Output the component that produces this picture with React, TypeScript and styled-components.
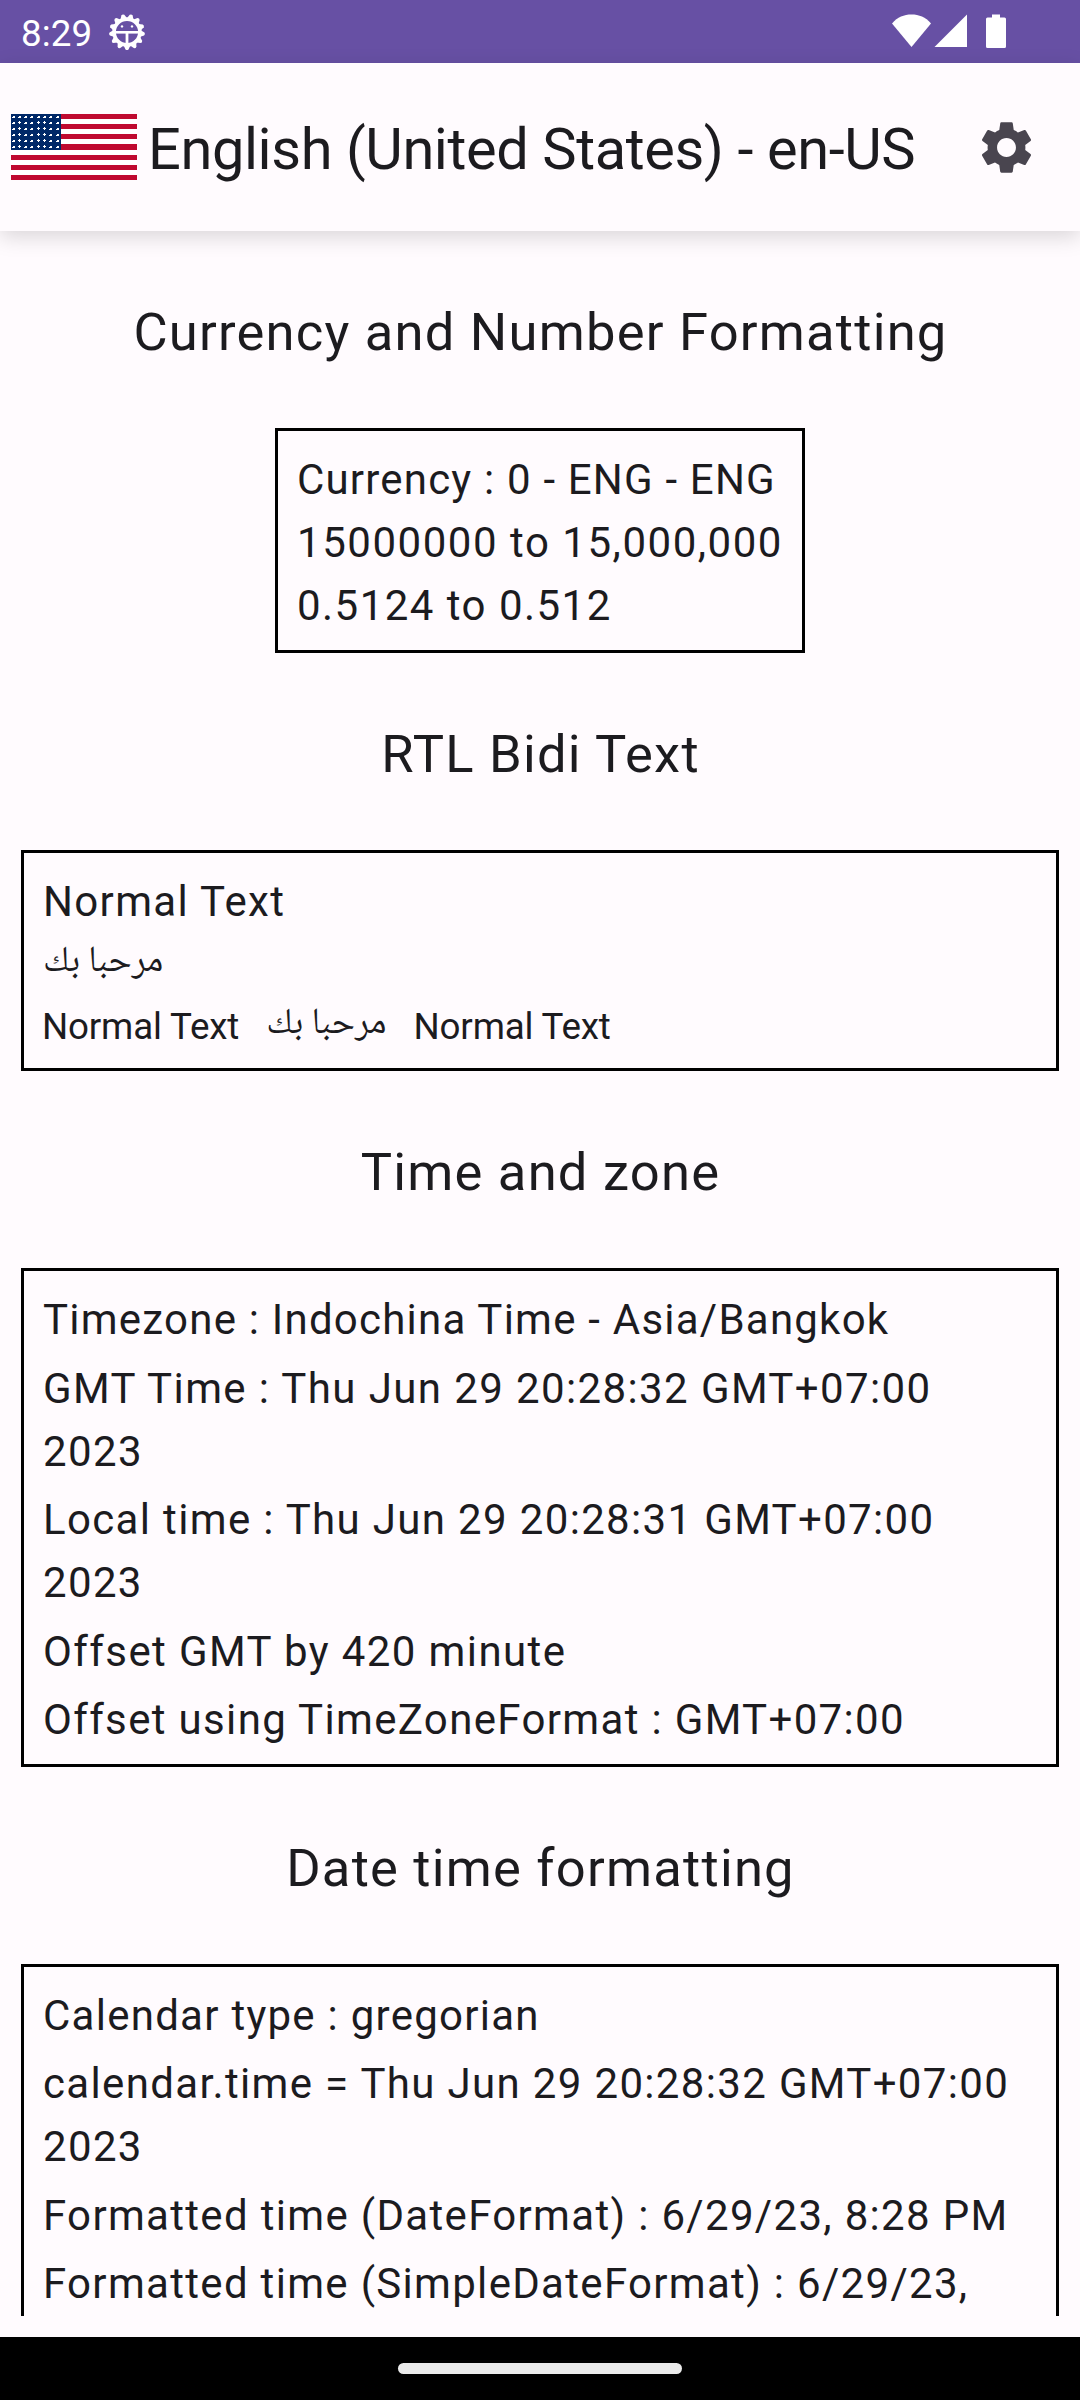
import React from "react";
import styled, { createGlobalStyle } from "styled-components";
import { MdSettings } from "react-icons/md";

const Global = createGlobalStyle`
  * { box-sizing: border-box; }
  body { margin: 0; background: #fffbfe; }
`;

const Screen = styled.div`
  width: 1080px;
  height: 2400px;
  display: flex;
  flex-direction: column;
  background: #fffbfe;
  color: #1c1b1f;
  font-family: Roboto, "Noto Sans", sans-serif;
  font-size: 42px;
  line-height: 63px;
  overflow: hidden;
`;

const StatusBar = styled.div`
  flex: none;
  height: 63px;
  display: flex;
  align-items: center;
  justify-content: space-between;
  padding: 0 70px 0 21px;
  background: #6750a4;
  color: #fff;
`;

const StatusGroup = styled.div`
  display: flex;
  align-items: center;
`;

const Clock = styled.span`
  font-size: 36.75px;
  letter-spacing: 0.1px;
  margin-top: 3px;
  margin-right: 16px;
`;

const AppBar = styled.header`
  flex: none;
  height: 168px;
  display: flex;
  align-items: center;
  padding: 0 42px 0 11px;
  background: #fffbfe;
  box-shadow: 0 6px 20px rgba(0, 0, 0, 0.15);
  z-index: 1;
`;

const Title = styled.h1`
  flex: 1;
  margin: 5px 0 0 11px;
  font-size: 57.75px;
  font-weight: 400;
  letter-spacing: -0.4px;
  line-height: 73px;
  white-space: nowrap;
`;

const SettingsButton = styled.button`
  display: flex;
  border: 0;
  padding: 0;
  background: none;
  color: #49454f;
  font-size: 63px;
`;

const Content = styled.main`
  flex: none;
  height: 2085px;
  overflow: hidden;
  display: flex;
  flex-direction: column;
  align-items: center;
  padding: 0 21px;
`;

const Heading = styled.h2<{ $track?: number }>`
  flex: none;
  height: 197px;
  margin: 0;
  padding: 5px 0 0 1px;
  display: flex;
  align-items: center;
  font-size: 52.5px;
  font-weight: 400;
  letter-spacing: ${(p) => p.$track ?? 1.23}px;
  white-space: nowrap;
`;

const Card = styled.section<{ $fit?: boolean; $height?: number; $gap?: number }>`
  flex: none;
  width: ${(p) => (p.$fit ? "530px" : "100%")};
  height: ${(p) => (p.$height ? `${p.$height}px` : "auto")};
  display: flex;
  flex-direction: column;
  gap: ${(p) => p.$gap ?? 0}px;
  border: 3px solid #000;
  padding: 17px 20px 0 19px;
  white-space: ${(p) => (p.$fit ? "nowrap" : "normal")};
`;

const Line = styled.p<{ $track?: number }>`
  margin: 0;
  letter-spacing: ${(p) => p.$track ?? 1.34}px;
`;

const Arabic = styled.p`
  margin: 0;
  direction: rtl;
  align-self: flex-start;
  font-family: "Noto Naskh Arabic", "Noto Sans Arabic", "DejaVu Sans", sans-serif;
  font-size: 36.75px;
  letter-spacing: 0;
  line-height: 61px;
`;

const BidiRow = styled.div`
  display: flex;
  gap: 27px;
  margin-left: -1px;
  padding-top: 1px;
  font-size: 36.75px;
`;

const NavBar = styled.footer`
  flex: none;
  height: 63px;
  margin-top: 21px;
  display: flex;
  justify-content: center;
  align-items: center;
  background: #000;
`;

const HomePill = styled.div`
  width: 284px;
  height: 11px;
  border-radius: 6px;
  background: #ebebeb;
`;

const FlagArt = styled.svg`
  flex: none;
  shape-rendering: crispEdges;
`;

const STRIPES = [0, 10, 20, 30, 41, 51, 61];
const STAR_X = [2, 8, 14, 20, 27, 33, 39, 46];
const STAR_Y = [1, 7, 13, 19, 25, 31];
const PLUS = "h1v1h1v1h-1v1h-1v-1h-1v-1h1z";
const BLOCK = "h2v2h-3v-1h1z";

function Flag() {
  return (
    <FlagArt width="126" height="66" viewBox="0 0 126 66">
      <rect width="126" height="66" fill="#fff" />
      {STRIPES.map((y) => (
        <rect key={y} y={y} width="126" height={y === 30 ? 6 : 5} fill="#bf0a30" />
      ))}
      <rect width="50" height="36" fill="#002868" />
      {STAR_Y.map((y, r) =>
        STAR_X.map((x, c) => {
          const plus = r > 0 && (c === 1 || c === 4 || c === 5);
          return <path key={`${r}-${c}`} d={`M${x} ${plus ? y : y + 1}${plus ? PLUS : BLOCK}`} fill="#fff" />;
        }),
      )}
    </FlagArt>
  );
}

function DebugIcon() {
  const teeth = Array.from({ length: 13 }, (_, i) => 180 + (i * 360) / 13);
  return (
    <svg width="38" height="38" viewBox="-19 -19 38 38" fill="none" stroke="#fff">
      <circle r="12.9" strokeWidth="3.6" />
      {teeth.map((a) => (
        <path key={a} d="M-3.2 -13.8 L-1.5 -17.4 Q0 -18.8 1.5 -17.4 L3.2 -13.8Z" fill="#fff" stroke="none" transform={`rotate(${a})`} />
      ))}
      <path d="M-12 0.3H12" strokeWidth="2.6" />
      <path d="M0 0V14" strokeWidth="2.8" />
      <circle cx="-5" cy="-5.6" r="1.2" fill="#fff" stroke="none" />
      <circle cx="5" cy="-5.6" r="1.2" fill="#fff" stroke="none" />
    </svg>
  );
}

function SignalIcons() {
  return (
    <svg width="118" height="36" viewBox="0 0 118 36" fill="#fff">
      <path d="M0 9.5C5.5 3 12 .5 19.5 .5S33.500 3 39 9.500L19.500 33Z" />
      <path d="M75 .5V33H42.500Z" />
      <path d="M100 .5H108V3.500H112.500a1.500 1.500 0 0 1 1.500 1.500V32.500a1.500 1.500 0 0 1-1.500 1.500H95.500a1.500 1.500 0 0 1-1.500-1.500V5a1.500 1.500 0 0 1 1.500-1.500H100Z" />
    </svg>
  );
}

export default function App() {
  return (
    <Screen>
      <Global />
      <StatusBar>
        <StatusGroup>
          <Clock>8:29</Clock>
          <DebugIcon />
        </StatusGroup>
        <SignalIcons />
      </StatusBar>
      <AppBar>
        <Flag />
        <Title>English (United States) - en-US</Title>
        <SettingsButton aria-label="Settings">
          <MdSettings />
        </SettingsButton>
      </AppBar>
      <Content>
        <Heading $track={1.22}>Currency and Number Formatting</Heading>
        <Card $fit $height={225}>
          <Line $track={1.19}>Currency : 0 - ENG - ENG</Line>
          <Line $track={1.53}>15000000 to 15,000,000</Line>
          <Line $track={1.47}>0.5124 to 0.512</Line>
        </Card>
        <Heading>RTL Bidi Text</Heading>
        <Card $height={221}>
          <Line>Normal Text</Line>
          <Arabic>مرحبا بك</Arabic>
          <BidiRow>
            <Line $track={-0.17}>Normal Text</Line>
            <Arabic>مرحبا بك</Arabic>
            <Line $track={-0.17}>Normal Text</Line>
          </BidiRow>
        </Card>
        <Heading>Time and zone</Heading>
        <Card $height={499} $gap={5.5}>
          <Line $track={1.23}>Timezone : Indochina Time - Asia/Bangkok</Line>
          <Line $track={1.39}>GMT Time : Thu Jun 29 20:28:32 GMT+07:00 2023</Line>
          <Line>Local time : Thu Jun 29 20:28:31 GMT+07:00 2023</Line>
          <Line $track={1.4}>Offset GMT by 420 minute</Line>
          <Line>Offset using TimeZoneFormat : GMT+07:00</Line>
        </Card>
        <Heading>Date time formatting</Heading>
        <Card $height={499} $gap={5.25}>
          <Line $track={1.26}>Calendar type : gregorian</Line>
          <Line>calendar.time = Thu Jun 29 20:28:32 GMT+07:00 2023</Line>
          <Line $track={1.32}>Formatted time (DateFormat) : 6/29/23, 8:28 PM</Line>
          <Line $track={1.31}>Formatted time (SimpleDateFormat) : 6/29/23,</Line>
        </Card>
      </Content>
      <NavBar>
        <HomePill />
      </NavBar>
    </Screen>
  );
}
